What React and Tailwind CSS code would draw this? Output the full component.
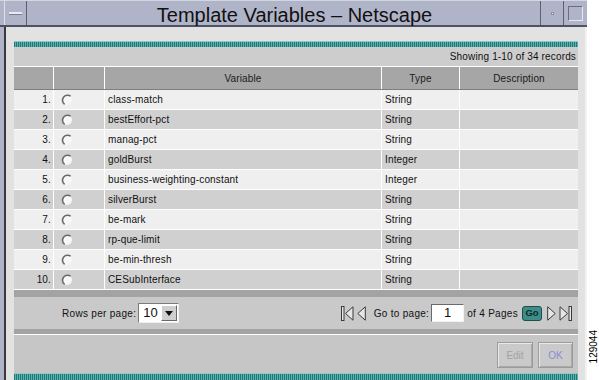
import React from "react";

const rows = [
  ["class-match", "String"],
  ["bestEffort-pct", "String"],
  ["manag-pct", "String"],
  ["goldBurst", "Integer"],
  ["business-weighting-constant", "Integer"],
  ["silverBurst", "String"],
  ["be-mark", "String"],
  ["rp-que-limit", "String"],
  ["be-min-thresh", "String"],
  ["CESubInterface", "String"],
];

function Radio() {
  return (
    <svg width="12" height="12" viewBox="0 0 12 12">
      <circle cx="6" cy="6" r="5" fill="#f7f7f7" />
      <path d="M3.6 10.4 A5 5 0 0 1 9.6 2.2" fill="none" stroke="#6a6a6a" strokeWidth="1.6" />
    </svg>
  );
}

function TealBar({ h }) {
  return (
    <div
      className={`${h} bg-[repeating-linear-gradient(90deg,#1d7a78_0px,#1d7a78_1px,#5fb0ac_1px,#5fb0ac_2px)] border-t border-[#8fc8c4]`}
    />
  );
}

function First() {
  return (
    <svg width="13" height="15" viewBox="0 0 13 15">
      <rect x="0.5" y="0.5" width="2.5" height="14" fill="#e6e6e6" stroke="#3a3a3a" />
      <path d="M12 0.8 L4.5 7.5 L12 14.2 Z" fill="#e6e6e6" stroke="#3a3a3a" />
    </svg>
  );
}
function Prev() {
  return (
    <svg width="9" height="15" viewBox="0 0 9 15">
      <path d="M8.3 0.8 L0.8 7.5 L8.3 14.2 Z" fill="#e6e6e6" stroke="#3a3a3a" />
    </svg>
  );
}
function Next() {
  return (
    <svg width="9" height="15" viewBox="0 0 9 15">
      <path d="M0.7 0.8 L8.2 7.5 L0.7 14.2 Z" fill="#e6e6e6" stroke="#3a3a3a" />
    </svg>
  );
}
function Last() {
  return (
    <svg width="13" height="15" viewBox="0 0 13 15">
      <path d="M1 0.8 L8.5 7.5 L1 14.2 Z" fill="#e6e6e6" stroke="#3a3a3a" />
      <rect x="10" y="0.5" width="2.5" height="14" fill="#e6e6e6" stroke="#3a3a3a" />
    </svg>
  );
}

export default function App() {
  return (
    <div className="relative w-[599px] h-[380px] overflow-hidden bg-white font-['Liberation_Sans',Arial,sans-serif] text-[#111]">
      <div className="w-[587px] h-full flex flex-col bg-[#b0b4c8]">
        {/* Title bar */}
        <div className="h-[27px] flex border-b-2 border-[#4e5264] border-t border-t-[#d4d6e0]">
          <div className="w-[4px]" />
          <div className="w-[23px] flex items-center justify-center border-l border-[#dcdee8] border-r border-r-[#5c6072]">
            <div className="w-[13px] h-[3px] bg-[#e8eaf0] border-b border-[#7a7e90]" />
          </div>
          <div className="flex-1 flex items-center justify-center pl-[22px] pt-[3px] text-[20px] leading-none text-[#111]">
            Template Variables – Netscape
          </div>
          <div className="w-[23px] flex items-center justify-center border-l border-[#5c6072]">
            <div className="w-[3px] h-[3px] bg-[#e8eaf0] border border-[#8a8ea0]" />
          </div>
          <div className="w-[24px] flex items-center justify-center border-l border-[#5c6072]">
            <div className="w-[15px] h-[15px] border border-[#6a6e80] border-b-[#e6e8f0] border-r-[#e6e8f0]" />
          </div>
        </div>

        {/* Body */}
        <div className="flex-1 flex">
          <div className="w-[4px] bg-[#b0b4c8]" />
          <div className="w-[2px] bg-[#3a3a3a]" />
          <div className="w-[579px] bg-[#e2e2e2] pt-[14px] pl-[8px] pr-[7px] flex flex-col">
            <TealBar h="h-[6px]" />
            <div className="h-[19px] bg-[#cdcdcd] flex items-center justify-end pr-[2px] text-[10px] tracking-[0.15px]">
              Showing 1-10 of 34 records
            </div>
            {/* header */}
            <div className="grid grid-cols-[39px_51px_277px_78px_119px] h-[24px] bg-[#a6a6a6] border-t border-white border-b border-b-[#7e7e7e] text-[10px] tracking-[0.15px] text-[#1a1a1a]">
              <div />
              <div className="border-l border-white" />
              <div className="border-l border-white flex items-center justify-center">Variable</div>
              <div className="border-l border-white flex items-center justify-center">Type</div>
              <div className="border-l border-white flex items-center justify-center">Description</div>
            </div>
            {rows.map(([name, type], i) => (
              <div
                key={name}
                className={`grid grid-cols-[39px_51px_277px_78px_119px] h-[20px] border-b border-white text-[10px] tracking-[0.15px] ${
                  i % 2 === 0 ? "bg-[#efefef]" : "bg-[#d0d0d0]"
                }`}
              >
                <div className="flex items-center justify-end pr-[2px]">{i + 1}.</div>
                <div className="border-l border-white flex items-center pl-[7px]">
                  <Radio />
                </div>
                <div className="border-l border-white flex items-center pl-[3px]">{name}</div>
                <div className="border-l border-white flex items-center pl-[3px]">{type}</div>
                <div className="border-l border-white" />
              </div>
            ))}
            <div className="h-[7px] bg-[#a3a3a3]" />
            {/* pagination */}
            <div className="h-[32px] bg-[#c9c9c9] flex items-center text-[10px] tracking-[0.3px]">
              <div className="w-[48px]" />
              <span>Rows per page:</span>
              <div className="ml-[2px] flex h-[20px] w-[41px] border border-[#7a7a7a] border-b-[#f0f0f0] border-r-[#f0f0f0] bg-white">
                <div className="flex-1 flex items-center pl-[4px] text-[13px] tracking-normal">10</div>
                <div className="w-[16px] my-[1px] mr-[1px] bg-[#cfcfcf] border border-white border-b-[#6a6a6a] border-r-[#6a6a6a] flex items-center justify-center">
                  <svg width="8" height="5" viewBox="0 0 8 5">
                    <path d="M0 0 L8 0 L4 5 Z" fill="#111" />
                  </svg>
                </div>
              </div>
              <div className="flex-1" />
              <div className="flex items-center">
                <First />
                <div className="w-[3px]" />
                <Prev />
                <span className="ml-[8px]">Go to page:</span>
                <div className="ml-[2px] w-[33px] h-[18px] bg-white border border-[#6a6a6a] border-b-[#f2f2f2] border-r-[#f2f2f2] flex items-center justify-center text-[13px] tracking-normal">
                  1
                </div>
                <span className="ml-[3px]">of 4 Pages</span>
                <div className="ml-[4px] w-[20px] h-[15px] rounded-[3px] bg-[#3f8c89] border border-[#1e4e4c] flex items-center justify-center text-[9.5px] font-bold text-[#0c2c2c] tracking-normal">
                  Go
                </div>
                <div className="ml-[5px]">
                  <Next />
                </div>
                <div className="ml-[3px]">
                  <Last />
                </div>
              </div>
              <div className="w-[6px]" />
            </div>
            <div className="h-[5px] bg-[#a3a3a3]" />
            <div className="h-[1px] bg-white" />
            {/* buttons */}
            <div className="h-[38px] bg-[#c6c6c6] flex justify-end items-start pt-[7px] pr-[5px] gap-[5px] text-[10px]">
              <div className="w-[36px] h-[26px] border border-[#9c9c9c] bg-[#cacaca] shadow-[inset_1px_1px_0_#e8e8e8,inset_-1px_-1px_0_#a8a8a8] flex items-center justify-center text-[#a2a2a2]">
                Edit
              </div>
              <div className="w-[35px] h-[26px] border border-[#9c9c9c] bg-[#cacaca] shadow-[inset_1px_1px_0_#e8e8e8,inset_-1px_-1px_0_#a8a8a8] flex items-center justify-center text-[#8a8ad2]">
                OK
              </div>
            </div>
            <TealBar h="flex-1" />
          </div>
          <div className="w-[2px] bg-[#f2f2f2]" />
        </div>
      </div>
      <div className="absolute left-[588px] top-[322px] w-[11px] h-[50px] flex items-center justify-center">
        <span className="[writing-mode:vertical-rl] rotate-180 text-[10px] leading-none text-black">129044</span>
      </div>
    </div>
  );
}
